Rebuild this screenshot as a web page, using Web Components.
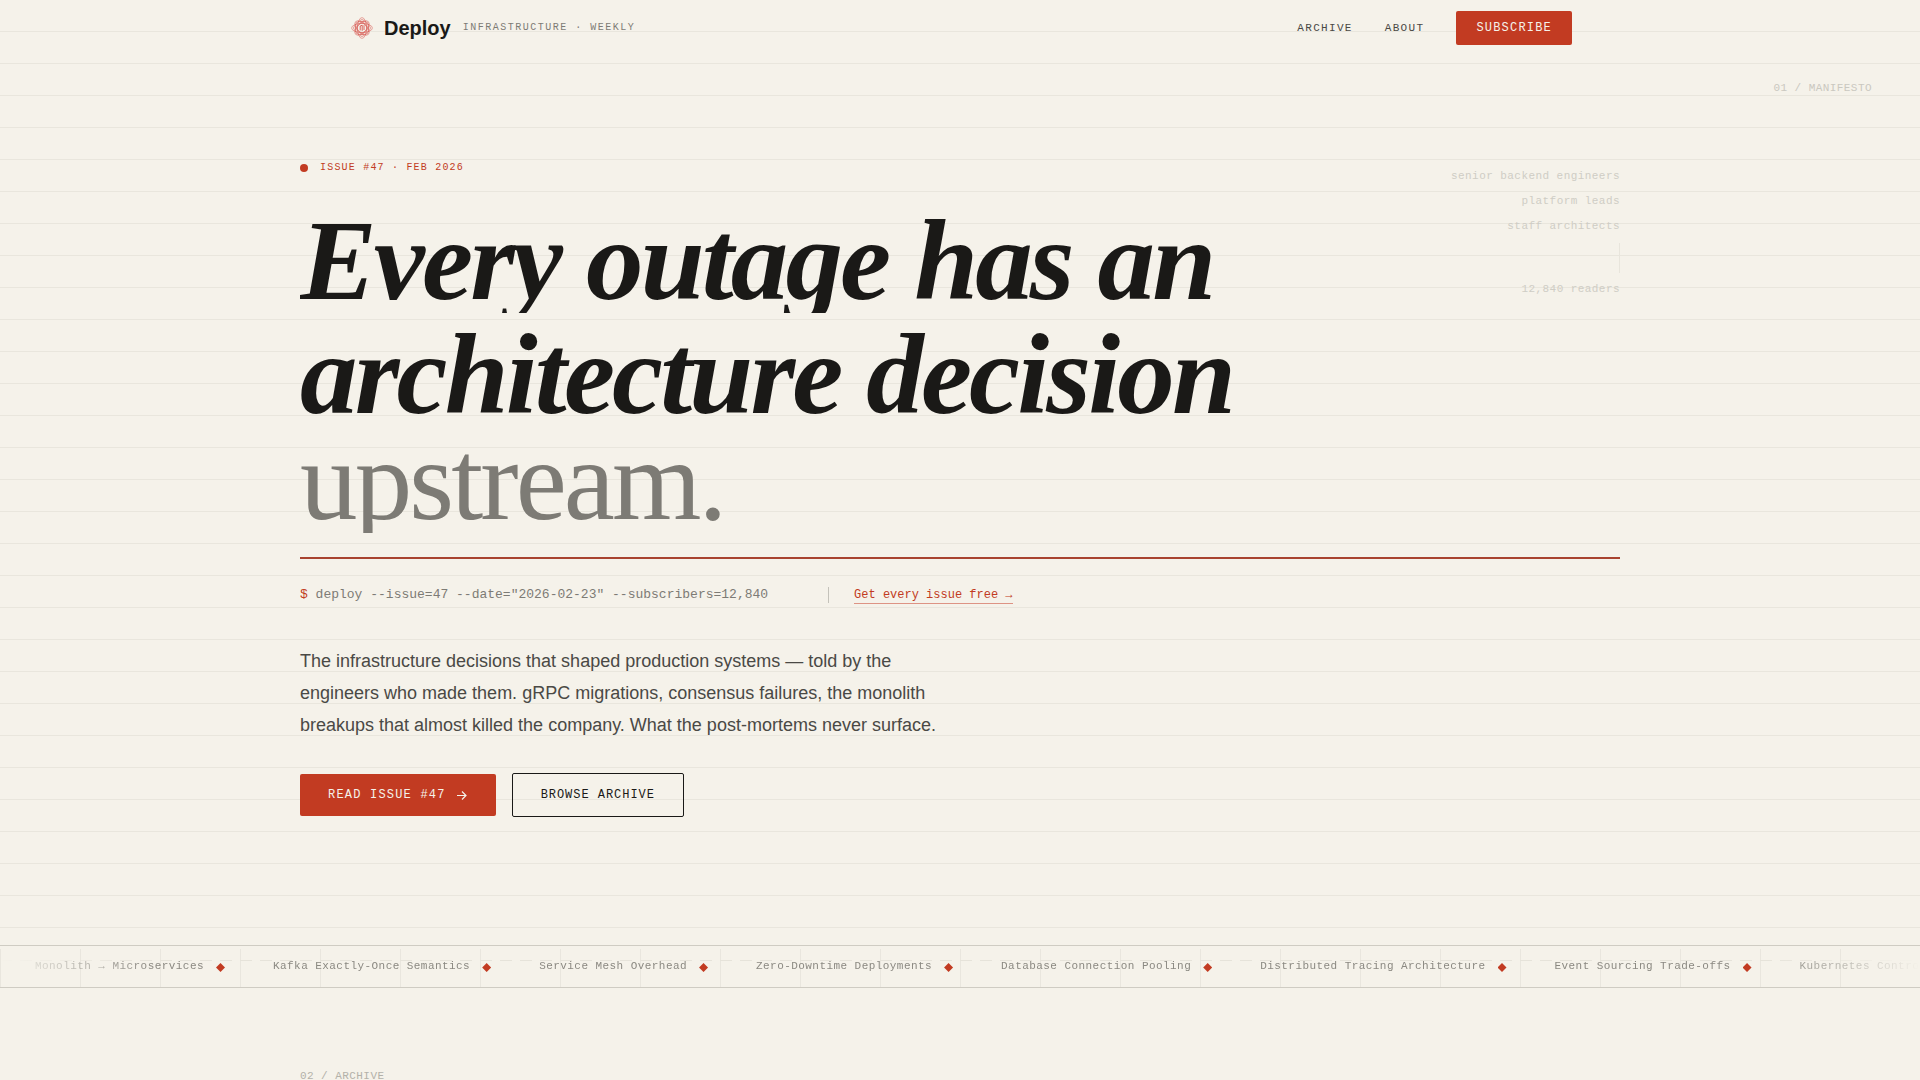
<!DOCTYPE html>
<html lang="en">
<head>
<meta charset="utf-8">
<title>Deploy — Infrastructure Weekly</title>
<style>
  :root {
    --paper: #f5f2ea;
    --ink: #1a1917;
    --body: #4a4945;
    --muted: #7d7b75;
    --faint: #b3b1a9;
    --accent: #c23b22;
    --line: #e9e6dd;
    --mono: "Liberation Mono", monospace;
    --sans: "Liberation Sans", sans-serif;
    --serif: "Liberation Serif", serif;
  }
  body {
    margin: 0;
    height: 100vh;
    overflow: hidden;
    background: var(--paper);
    color: var(--ink);
    font-family: var(--sans);
  }
</style>
</head>
<body>
<deploy-page></deploy-page>

<script>
const define = (name, markup, ready) => {
  const template = document.createElement('template');
  template.innerHTML = markup;
  customElements.define(name, class extends HTMLElement {
    constructor() {
      super();
      this.attachShadow({ mode: 'open' }).append(template.content.cloneNode(true));
    }
    connectedCallback() { if (ready) ready(this.shadowRoot, this); }
  });
};

/* Rosette mark: interlaced petals in a diamond outline, with a small monogram stroke in the middle */
define('deploy-mark', `
  <style>
    :host { display: block; width: 28px; height: 28px; }
    svg { display: block; width: 100%; height: 100%; }
  </style>
  <svg viewBox="0 0 28 28" fill="none" stroke="#d6534d" stroke-width="0.5" aria-hidden="true">
    <g class="petals"></g>
    <rect x="7.2" y="7.2" width="13.6" height="13.6" rx="3" transform="rotate(45 14 14)"/>
    <rect x="8.8" y="8.8" width="10.4" height="10.4" rx="2.5" transform="rotate(45 14 14)"/>
    <rect x="7.4" y="7.4" width="13.2" height="13.2" rx="4"/>
    <circle cx="14" cy="14" r="4.6"/>
    <path d="M12.2 16.4v-4.4M12.2 12l2-.8v5.6M16 11.2v4.8" stroke-width="0.9"/>
  </svg>`, root => {
  const g = root.querySelector('.petals');
  for (let a = 0; a < 180; a += 45) {
    const e = document.createElementNS('http://www.w3.org/2000/svg', 'ellipse');
    e.setAttribute('cx', 14); e.setAttribute('cy', 14);
    e.setAttribute('rx', 4.6); e.setAttribute('ry', a % 90 ? 9 : 10.4);
    e.setAttribute('transform', `rotate(${a} 14 14)`);
    g.append(e);
  }
});

define('action-link', `
  <style>
    :host { display: block; }
    a {
      display: flex; align-items: center; gap: 8px;
      box-sizing: border-box; border-radius: 2px;
      padding: 14px 28px;
      font: 12px/14px var(--mono);
      text-decoration: none; text-transform: uppercase; white-space: nowrap;
      background: var(--accent); color: var(--paper); letter-spacing: .1em;
    }
    :host([compact]) a { padding: 10px 20px; }
    :host([outline]) a { background: none; color: var(--ink); border: 1px solid var(--ink); letter-spacing: .08em; }
  </style>
  <a href="#"><slot></slot></a>`);

define('site-header', `
  <style>
    :host { display: block; }
    .bar {
      max-width: 1224px; height: 56px; margin: 0 auto;
      display: flex; align-items: center; justify-content: space-between;
    }
    .brand, nav { display: flex; align-items: center; }
    .brand { gap: 8px; color: var(--ink); text-decoration: none; }
    .name { font: bold 20px/24px var(--sans); }
    .tag { margin-left: 4px; font: 10px/18px var(--mono); letter-spacing: .15em; color: var(--muted); text-transform: uppercase; }
    nav { gap: 32px; }
    nav > a { font: 11px/16px var(--mono); letter-spacing: .12em; color: var(--body); text-decoration: none; text-transform: uppercase; }
  </style>
  <header class="bar">
    <a class="brand" href="#"><deploy-mark></deploy-mark><span class="name">Deploy</span><span class="tag">Infrastructure · Weekly</span></a>
    <nav>
      <a href="#">Archive</a>
      <a href="#">About</a>
      <action-link compact>Subscribe</action-link>
    </nav>
  </header>`);

define('section-label', `
  <style>
    :host { display: block; font: 11px/16px var(--mono); letter-spacing: .04em; text-transform: uppercase; color: var(--faint); }
  </style>
  <slot></slot>`);

define('headline-line', `
  <style>
    :host { display: block; height: 106px; overflow: hidden; font: italic bold 115px/108px var(--serif); letter-spacing: -.025em; color: var(--ink); white-space: nowrap; }
    :host([lead]) { margin-bottom: 8px; }
    :host([quiet]) { font-style: normal; font-weight: normal; color: var(--muted); }
  </style>
  <slot></slot>`);

define('reader-list', `
  <style>
    :host { display: block; padding-top: 4px; text-align: right; font: 11px/25px var(--mono); letter-spacing: .04em; color: #cfcdc5; }
    ul { list-style: none; margin: 0; padding: 0; }
    .stem { width: 1px; height: 30px; margin: 4px 0 4px auto; background: #e8e5dc; }
  </style>
  <ul><li>senior backend engineers</li><li>platform leads</li><li>staff architects</li></ul>
  <div class="stem"></div>
  <div>12,840 readers</div>`);

define('hero-section', `
  <style>
    :host { display: block; padding: 24px 0 128px; }
    section-label { text-align: right; padding-right: 48px; color: #cac8c0; }
    .inner { max-width: 1320px; margin: 64px auto 0; }
    .top { display: flex; justify-content: space-between; padding-bottom: 24px; border-bottom: 2px solid #a8432f; }
    .issue { display: flex; align-items: center; gap: 12px; margin-bottom: 31px; font: 10px/16px var(--mono); letter-spacing: .12em; color: var(--accent); text-transform: uppercase; }
    .issue i { width: 8px; height: 8px; border-radius: 50%; background: var(--accent); }
    h1 { margin: 0; }
    .command { display: flex; align-items: baseline; margin: 24px 0 38px; font: 13px/24px var(--mono); color: var(--muted); }
    .prompt { color: var(--accent); }
    .command .bar { align-self: center; width: 1px; height: 16px; margin: 0 25px 0 60px; background: #c4c2ba; }
    .command a { font-size: 12px; line-height: 15px; color: var(--accent); text-decoration: none; border-bottom: 1px solid #dd9384; }
    p { margin: 0 0 32px; max-width: 640px; font: 18px/32px var(--sans); color: var(--body); }
    .actions { display: flex; align-items: center; gap: 16px; }
    svg { display: block; width: 14px; height: 14px; }
  </style>
  <section-label>01 / Manifesto</section-label>
  <div class="inner">
    <div class="top">
      <div>
        <div class="issue"><i></i><span>Issue #47 · Feb 2026</span></div>
        <h1>
          <headline-line lead>Every outage has an</headline-line>
          <headline-line>architecture decision</headline-line>
          <headline-line quiet>upstream.</headline-line>
        </h1>
      </div>
      <reader-list></reader-list>
    </div>
    <div class="command">
      <span><span class="prompt">$</span> deploy --issue=47 --date="2026-02-23" --subscribers=12,840</span>
      <span class="bar"></span>
      <a href="#">Get every issue free →</a>
    </div>
    <p>The infrastructure decisions that shaped production systems — told by the engineers who made them. gRPC migrations, consensus failures, the monolith breakups that almost killed the company. What the post-mortems never surface.</p>
    <div class="actions">
      <action-link>Read Issue #47
        <svg viewBox="0 0 14 14" fill="none" stroke="currentColor" stroke-width="1.2" aria-hidden="true"><path d="M3 7.5h9M8 3.5l4 4-4 4"/></svg>
      </action-link>
      <action-link outline>Browse Archive</action-link>
    </div>
  </div>`);

define('topic-ticker', `
  <style>
    :host {
      display: block; overflow: hidden;
      border: 1px solid #cfccc3; border-width: 1px 0;
      background: repeating-linear-gradient(90deg, #e9e6de 0 1px, transparent 1px 80px) 0 3px no-repeat;
    }
    .track {
      display: flex; box-sizing: border-box; height: 41px; align-items: flex-start; padding: 12px 0 0 35px;
      font: 11px/16px var(--mono); letter-spacing: .04em; color: #8b8982; white-space: nowrap;
      background: repeating-linear-gradient(90deg, #e6e3da 0 12px, transparent 12px 20px) 0 14px / 100% 1px no-repeat;
    }
    .fade { -webkit-mask: linear-gradient(90deg, transparent, #000 8%, #000 92%, transparent); mask: linear-gradient(90deg, transparent, #000 8%, #000 92%, transparent); }
    .item { display: flex; flex: none; align-items: flex-end; margin-right: 48px; }
    .item i { width: 9px; height: 9px; margin: 0 0 2px 12px; background: var(--accent); clip-path: polygon(50% 0, 100% 50%, 50% 100%, 0 50%); }
  </style>
  <div class="fade"><div class="track"></div></div>`, root => {
  const topics = ['Monolith → Microservices', 'Kafka Exactly-Once Semantics', 'Service Mesh Overhead',
    'Zero-Downtime Deployments', 'Database Connection Pooling', 'Distributed Tracing Architecture',
    'Event Sourcing Trade-offs', 'Kubernetes Control Plane'];
  root.querySelector('.track').innerHTML = topics.map(t => `<span class="item">${t}<i></i></span>`).join('');
});

define('archive-section', `
  <style>
    :host { display: block; max-width: 1320px; margin: 0 auto; padding-top: 80px; }
  </style>
  <section-label>02 / Archive</section-label>`);

define('deploy-page', `
  <style>
    :host { display: block; }
    .cover { background: repeating-linear-gradient(transparent 0 31px, var(--line) 31px 32px); }
  </style>
  <div class="cover">
    <site-header></site-header>
    <hero-section></hero-section>
  </div>
  <topic-ticker></topic-ticker>
  <archive-section></archive-section>`);
</script>
</body>
</html>
